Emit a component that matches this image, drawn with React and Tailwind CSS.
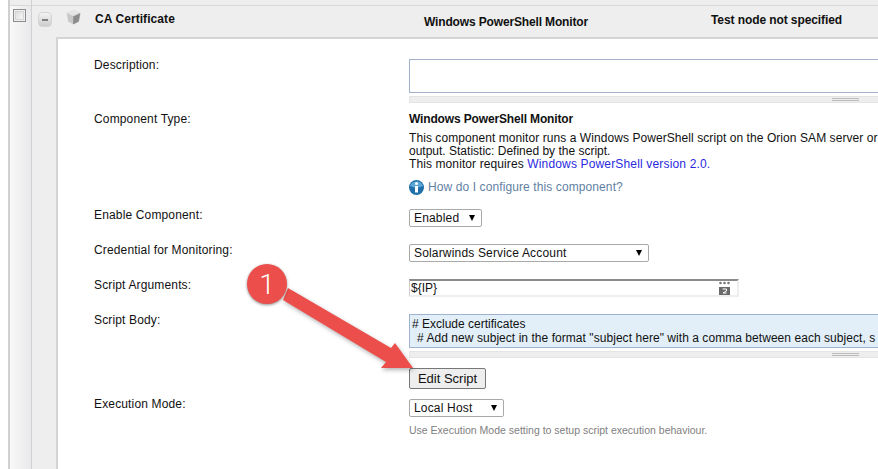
import React from "react";

function Grabber() {
  return (
    <div className="flex h-[7px] w-[600px] items-center justify-start border border-[#e4e4e4] bg-[#eeeeee] pl-[422px]">
      <div className="h-[3px] w-[27px] border-y border-[#bbbbbb]" />
    </div>
  );
}

function Row({ label, top, children }) {
  return (
    <div className="flex items-start" style={{ marginTop: top }}>
      <div className="w-[315px] shrink-0 tracking-[0.15px] text-[#111]">{label}</div>
      <div className="min-w-0 flex-1">{children}</div>
    </div>
  );
}

function Select({ w, text }) {
  return (
    <div className={`flex h-[18px] ${w} items-center justify-between rounded-[2px] border border-[#a9a9a9] bg-white pl-[4px] pr-[6px] text-[#111]`}>
      <span className="tracking-[0.17px]">{text}</span>
      <span className="h-0 w-0 border-x-[3.5px] border-t-[6px] border-x-transparent border-t-black" />
    </div>
  );
}

export default function App() {
  return (
    <div className="relative flex h-[469px] w-[878px] overflow-hidden bg-white font-['Liberation_Sans',Arial,sans-serif] text-[12px] leading-[13px]">
      <div className="w-[8px] shrink-0 bg-white" />

      <div className="flex w-[24px] shrink-0 flex-col border-x border-l-2 border-[#d0d0d0]">
        <div className="h-[6px] shrink-0 border-b border-[#d8d8d8] bg-[#eeeeee]" />
        <div className="flex-1 bg-gradient-to-r from-[#f9f9f9] to-[#e9e9ec] pl-[3px] pt-[3px]">
          <div className="flex h-[13px] w-[13px] items-center justify-center border border-[#8c8c8c] bg-[#f0f0f0]">
            <div className="h-[9px] w-[9px] border border-[#d4d4d4] bg-gradient-to-br from-[#dedede] to-[#f6f6f6]" />
          </div>
        </div>
      </div>

      <div className="flex min-w-0 flex-1 flex-col bg-[#eeeeee]">
        <div className="h-[6px] shrink-0 border-b border-[#d8d8d8] bg-[#eeeeee]" />
        <div className="flex h-[31px] shrink-0 items-center bg-[#eeeeee]">
          <div className="ml-[6px] mb-[4px] flex h-[15px] w-[14px] items-center justify-center rounded-[4px] border border-[#d4d4d4] bg-gradient-to-b from-[#f4f4f4] to-[#cccccc]">
            <div className="h-[2px] w-[6px] bg-[#808080]" />
          </div>
          <svg className="ml-[14px] mb-[9px]" width="15" height="16" viewBox="0 0 15 16">
            <path d="M7.5 1.5 L13.5 4 L7.5 7 L1.5 4 Z" fill="#e4e4e4" stroke="#e4e4e4" strokeWidth="1.5" strokeLinejoin="round" />
            <path d="M1 4.5 L7.5 7.5 L7.5 15 L2.5 12.5 Z" fill="#c8c8c8" stroke="#c8c8c8" strokeWidth="0.6" strokeLinejoin="round" />
            <path d="M14 4.5 L7.5 7.5 L7.5 15 L12.5 12.5 Z" fill="#8c8c8c" stroke="#8c8c8c" strokeWidth="0.6" strokeLinejoin="round" />
          </svg>
          <div className="ml-[14px] mb-[4px] w-[329px] font-bold tracking-[0.07px] text-[#111]">CA Certificate</div>
          <div className="mt-[2px] w-[287px] font-bold tracking-[-0.15px] text-[#111]">Windows PowerShell Monitor</div>
          <div className="mb-[2px] whitespace-nowrap font-bold tracking-[-0.09px] text-[#111]">Test node not specified</div>
        </div>

        <div className="ml-[24px] flex-1 border-l-2 border-t-2 border-[#d4d4d4] bg-white pl-[36px] pt-[20px]">
          <Row label="Description:" top={0}>
            <div className="h-[34px] w-[600px] border border-[#9fb2c9] bg-white" />
            <div className="mt-[3px]"><Grabber /></div>
          </Row>

          <Row label="Component Type:" top={10}>
            <div className="whitespace-nowrap font-bold tracking-[-0.15px] text-[#111]">Windows PowerShell Monitor</div>
            <div className="mt-[6px] whitespace-nowrap tracking-[0.07px] text-[#111]">This component monitor runs a Windows PowerShell script on the Orion SAM server or</div>
            <div className="whitespace-nowrap text-[#111]">output. Statistic: Defined by the script.</div>
            <div className="whitespace-nowrap tracking-[0.1px] text-[#111]">This monitor requires <span className="tracking-[0.16px] text-[#2a2ae0]">Windows PowerShell version 2.0.</span></div>
            <div className="mt-[9px] flex items-center">
              <svg width="15" height="15" viewBox="0 0 15 15">
                <circle cx="7.5" cy="7.5" r="7.5" fill="#1f6fa8" />
                <path d="M1 6 A7 7 0 0 1 14 6 Q7.5 9 1 6 Z" fill="#5da6d8" />
                <circle cx="7.5" cy="3.6" r="1.5" fill="#fff" />
                <rect x="6" y="6" width="3" height="6.5" fill="#fff" />
              </svg>
              <span className="ml-[4px] whitespace-nowrap tracking-[0.1px] text-[#5f7fa3]">How do I configure this component?</span>
            </div>
          </Row>

          <Row label="Enable Component:" top={14}>
            <Select w="w-[73px]" text="Enabled" />
          </Row>

          <Row label="Credential for Monitoring:" top={17}>
            <Select w="w-[240px]" text="Solarwinds Service Account" />
          </Row>

          <Row label="Script Arguments:" top={17}>
            <div className="flex h-[18px] w-[330px] items-center justify-between border-t-2 border-l border-r-2 border-b-2 border-t-[#8a8a8a] border-l-[#cfcfcf] border-r-[#eeeeee] border-b-[#eeeeee] bg-white pl-[1px] pr-[6px]">
              <span className="text-[#111]">{"${IP}"}</span>
              <svg width="13" height="14" viewBox="0 0 13 14" className="-mt-[1px]">
                <circle cx="2.5" cy="2" r="1.3" fill="#777" />
                <circle cx="6.5" cy="2" r="1.3" fill="#777" />
                <circle cx="10.5" cy="2" r="1.3" fill="#777" />
                <rect x="1" y="6" width="11" height="8" fill="#6a6a6a" />
                <path d="M4.5 8 H8.5 V10 L5 12 H8.5" stroke="#fff" strokeWidth="1" fill="none" />
              </svg>
            </div>
          </Row>

          <Row label="Script Body:" top={17}>
            <div className="h-[34px] w-[600px] border border-[#9fb2d0] bg-[#e2eff8] py-[3px] pl-[2px] text-[#111]">
              <div className="whitespace-nowrap"># Exclude certificates</div>
              <div className="mt-[1px] ml-[5px] whitespace-nowrap tracking-[0.05px]"># Add new subject in the format "subject here" with a comma between each subject, s</div>
            </div>
            <div className="mt-[3px]"><Grabber /></div>
            <div className="mt-[10px] flex h-[21px] w-[77px] items-center justify-center rounded-[2px] border border-[#777] bg-[#eeeeee] text-[13px] text-[#111]">Edit Script</div>
          </Row>

          <Row label="Execution Mode:" top={9}>
            <div className="pt-[1px]">
              <Select w="w-[95px]" text="Local Host" />
            </div>
            <div className="mt-[7px] whitespace-nowrap text-[10.5px] text-[#808080]">Use Execution Mode setting to setup script execution behaviour.</div>
          </Row>
        </div>
      </div>

      <svg className="absolute left-[240px] top-[260px] drop-shadow-[1px_2px_2px_rgba(0,0,0,0.3)]" width="190" height="125" viewBox="0 0 190 125">
        <path d="M48 28 L151 88 L155 83 L173 108 L141 108 L146 102 L43 40 Z" fill="#eb4e4b" />
      </svg>
      <div className="absolute left-[247px] top-[264px] flex h-[40px] w-[40px] items-center justify-center rounded-full bg-[#eb4e4b] font-['Roboto',sans-serif] text-[28px] font-light text-white shadow-[0_1px_3px_rgba(0,0,0,0.45)]">1</div>
    </div>
  );
}
